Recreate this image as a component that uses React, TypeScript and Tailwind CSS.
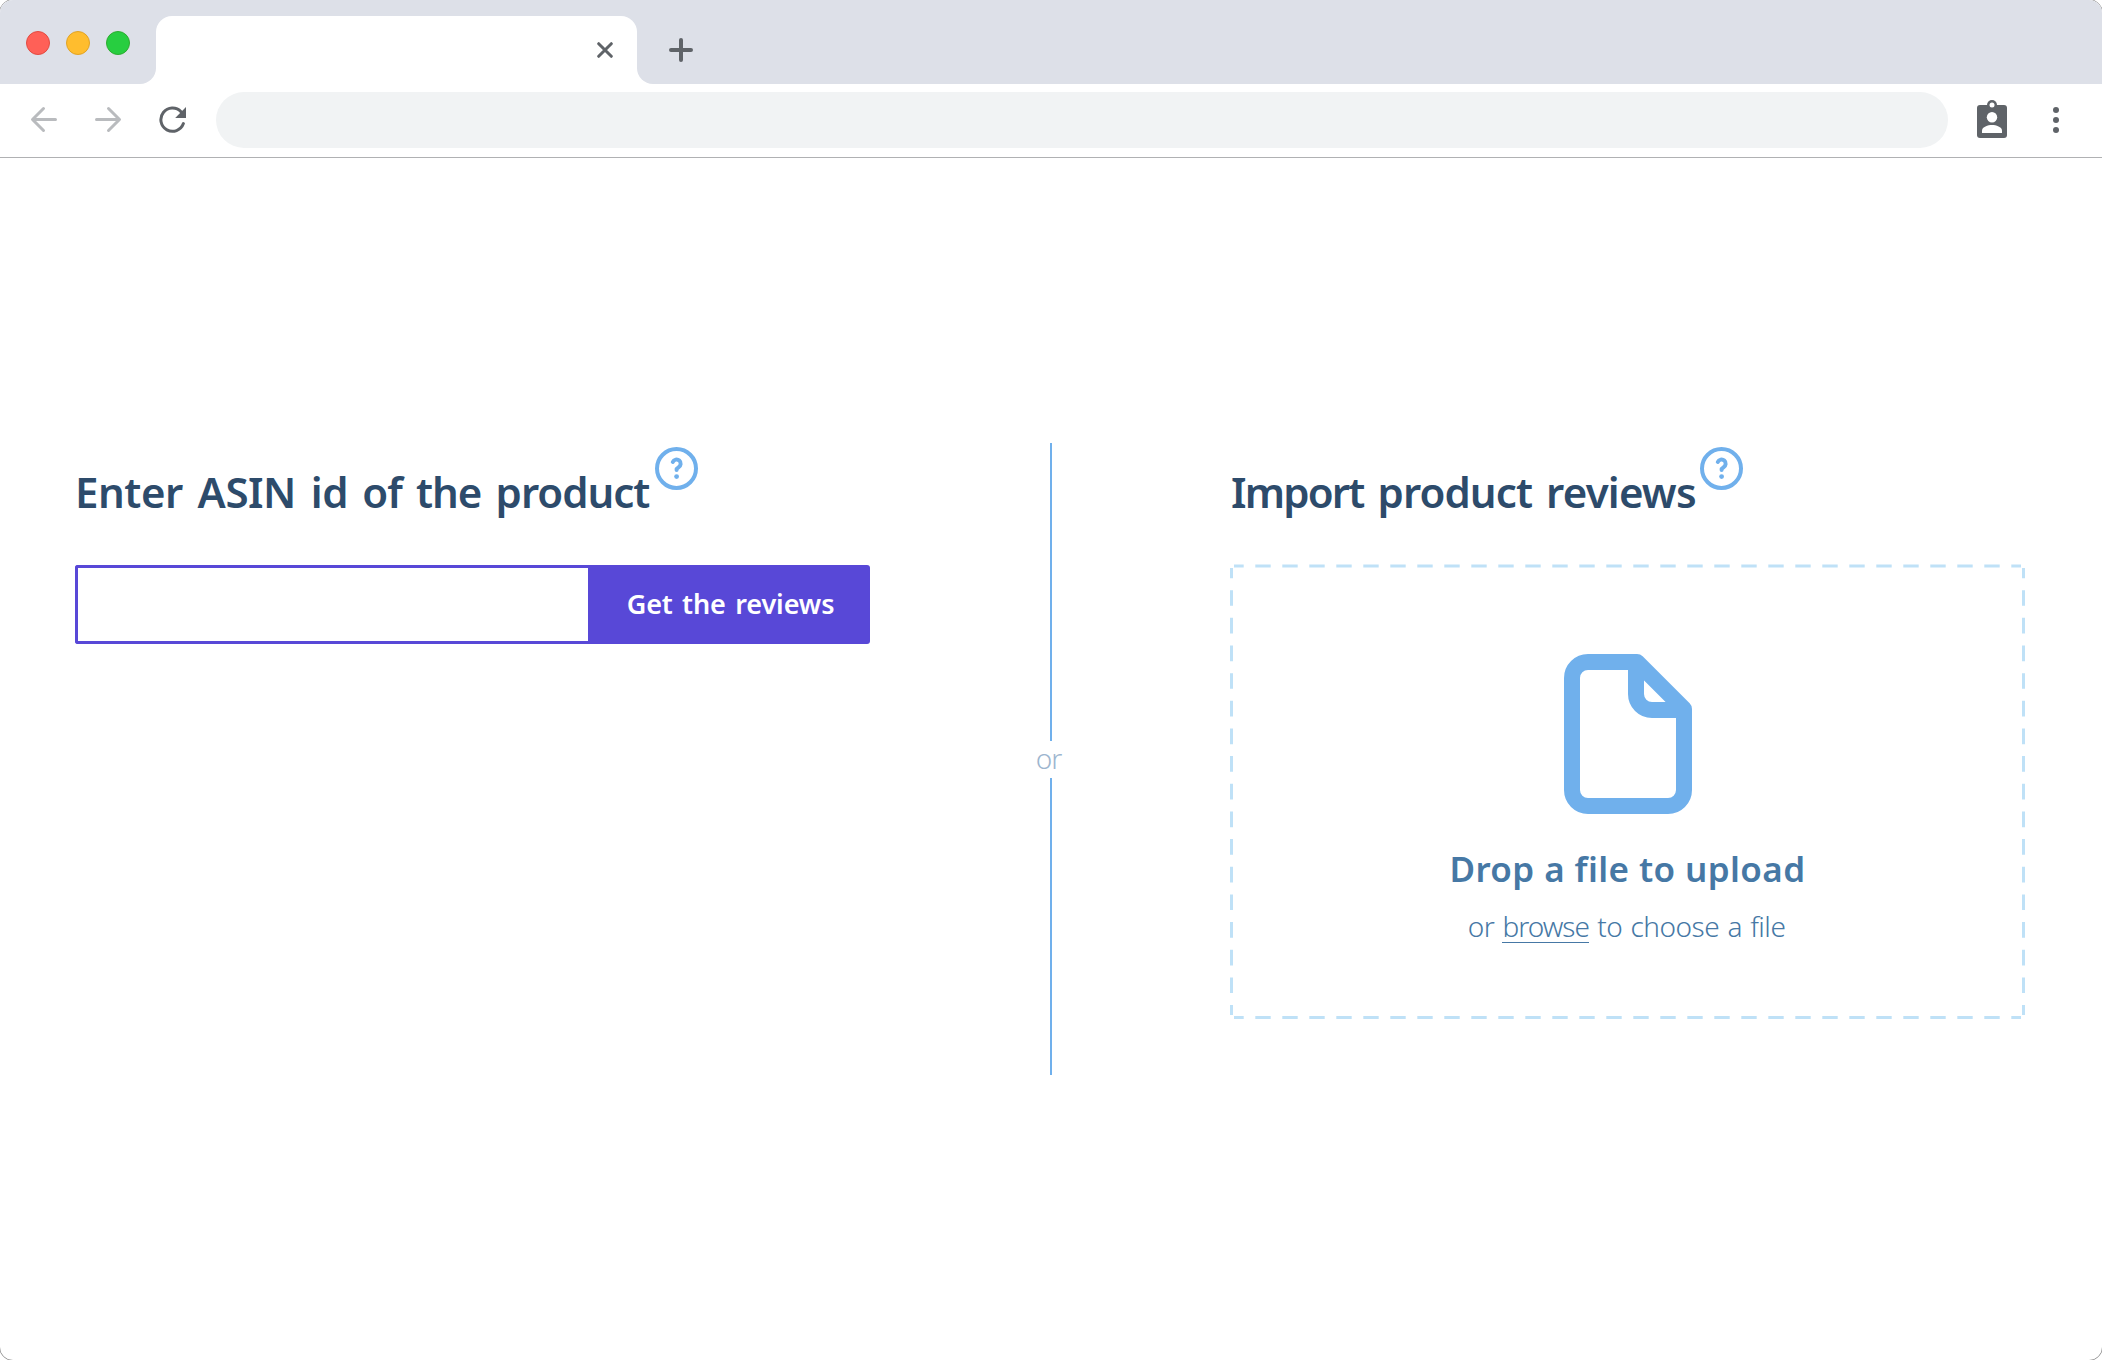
import React from "react";

function HelpIcon() {
  return (
    <svg viewBox="0 0 43 43" className="h-[43px] w-[43px] shrink-0" fill="none" stroke="#70b0ec" strokeWidth="4">
      <circle cx="21.5" cy="21.5" r="19.5" />
      <path d="M17.8 15a4.1 4.1 0 1 1 5.8 5.2c-1.2.7-2 1.5-2 2.8" strokeLinecap="round" />
      <circle cx="21.6" cy="29.6" r="2.4" fill="#70b0ec" stroke="none" />
    </svg>
  );
}

function TabStrip() {
  return (
    <div className="flex h-[84px] bg-white">
      <div className="flex w-[156px] gap-4 rounded-br-2xl bg-[#dde0e8] pt-[31px] pl-[26px]">
        <span className="h-6 w-6 rounded-full border border-[#e24b41] bg-[#ff6057]" />
        <span className="h-6 w-6 rounded-full border border-[#e1a325] bg-[#ffbd2e]" />
        <span className="h-6 w-6 rounded-full border border-[#2dac2f] bg-[#27ce40]" />
      </div>
      <div className="flex w-[481px] flex-col">
        <div className="-mb-4 h-8 bg-[#dde0e8]" />
        <div className="flex h-[68px] items-center justify-end rounded-t-2xl bg-white pr-6">
          <svg viewBox="0 0 16 16" className="h-4 w-4" stroke="#5f6368" strokeWidth="3" strokeLinecap="round">
            <path d="M1.7 1.7 14.3 14.3M14.3 1.7 1.7 14.3" />
          </svg>
        </div>
      </div>
      <div className="flex-1 rounded-bl-2xl bg-[#dde0e8] pt-[38px] pl-8">
        <svg viewBox="0 0 24 24" className="h-6 w-6" stroke="#5f6368" strokeWidth="4" strokeLinecap="round">
          <path d="M12 2v20M2 12h20" />
        </svg>
      </div>
    </div>
  );
}

function Toolbar() {
  return (
    <div className="flex h-[74px] items-start border-b border-[#b0b1b3] bg-white pt-2">
      <div className="flex h-14 w-[216px] items-center pl-[30px]">
        <svg viewBox="0 0 28 28" className="h-7 w-7" fill="none" stroke="#b9bbbe" strokeWidth="3" strokeLinecap="round" strokeLinejoin="round">
          <path d="M25.5 13.5H3M13.5 2.5 2.5 13.5l11 11" />
        </svg>
        <svg viewBox="0 0 28 28" className="ml-9 h-7 w-7" fill="none" stroke="#b9bbbe" strokeWidth="3" strokeLinecap="round" strokeLinejoin="round">
          <path d="M2.5 13.5H25M14.5 2.5l11 11-11 11" />
        </svg>
        <svg viewBox="0 0 28 28" className="ml-9 h-7 w-7" fill="none">
          <path d="M25.4 17.6A11.6 11.6 0 1 1 23 5.800" stroke="#5f6368" strokeWidth="3" strokeLinecap="round" />
          <path d="M28 1v11H17.200z" fill="#5f6368" />
        </svg>
      </div>
      <div className="h-14 w-[1732px] rounded-full bg-[#f1f3f4]" />
      <svg viewBox="0 0 30 38" className="mt-2 ml-[29px] h-[38px] w-[30px]">
        <rect x="0" y="5" width="30" height="33" rx="3" fill="#5f6368" />
        <circle cx="15" cy="5" r="5" fill="#5f6368" />
        <circle cx="15" cy="5" r="2.5" fill="#fff" />
        <circle cx="15" cy="17.3" r="5.2" fill="#fff" />
        <path d="M5 33v-2.6C5 27 11 25 15 25s10 2 10 5.400V33z" fill="#fff" />
      </svg>
      <svg viewBox="0 0 6 26" className="mt-[15px] ml-[46px] h-[26px] w-1.5" fill="#5f6368">
        <circle cx="3" cy="3" r="3" />
        <circle cx="3" cy="13" r="3" />
        <circle cx="3" cy="23" r="3" />
      </svg>
    </div>
  );
}

function Heading({ children }: { children: React.ReactNode }) {
  return (
    <div className="flex h-[117px]">
      <h1 className="pt-[21px] text-[42px] leading-[56px] font-semibold whitespace-nowrap text-[#2d4b6b]">{children}</h1>
      <div className="pt-[4px]">
        <HelpIcon />
      </div>
    </div>
  );
}

function AsinPanel() {
  return (
    <section className="w-[795px]">
      <Heading>
        <span className="mr-[5px] block w-[575px] tracking-[-1px] [word-spacing:4.300px]">
          <span className="tracking-[-0.450px]">Enter ASIN id</span> of the product
        </span>
      </Heading>
      <form className="mt-[5px] flex h-[79px]">
        <input className="w-[513px] rounded-l-[3px] border-[3px] border-r-0 border-[#5848d7] bg-white outline-none" />
        <button type="button" className="w-[282px] rounded-r-[3px] bg-[#5848d7] pl-[3px] text-[27px] font-semibold tracking-[-0.1px] whitespace-nowrap text-white [word-spacing:2.5px]">
          Get the reviews
        </button>
      </form>
    </section>
  );
}

function Divider() {
  return (
    <div className="flex h-[632px] w-[32px] flex-col items-center">
      <span className="w-[1.5px] flex-1 bg-[#70b0ec]" />
      <span className="mr-[5px] flex h-[37px] items-center pb-[3px] text-[28px] leading-none font-light tracking-[-1px] text-[#9db6cf]">or</span>
      <span className="w-[1.5px] flex-1 bg-[#70b0ec]" />
    </div>
  );
}

function DashedOutline() {
  return (
    <svg viewBox="0 0 795 455" className="pointer-events-none absolute inset-0 h-[455px] w-[795px]" stroke="#bfe1f7" strokeWidth="3">
      <path d="M4 2H791" strokeDasharray="15.4 11.6" strokeDashoffset="5.7" />
      <path d="M4 453.500H791" strokeDasharray="15.4 11.6" strokeDashoffset="5.7" />
      <path d="M1.500 4V451" strokeDasharray="15.7 11.96" strokeDashoffset="5.5" />
      <path d="M793.500 4V451" strokeDasharray="15.7 11.96" strokeDashoffset="5.5" />
    </svg>
  );
}

function ImportPanel() {
  return (
    <section className="w-[795px]">
      <Heading>
        <span className="mr-[4px] ml-px block w-[465px] tracking-[-0.9px] [word-spacing:4px]">
          <span className="tracking-[-1.8px]">Import</span> product <span className="tracking-[-0.8px]">reviews</span>
        </span>
      </Heading>
      <div className="relative mt-[4px] flex h-[455px] flex-col items-center pt-[90px]">
        <DashedOutline />
        <svg viewBox="0 0 128 160" className="h-40 w-32" fill="none" stroke="#70b0ec" strokeWidth="16" strokeLinejoin="round">
          <path d="M73 8H24A16 16 0 0 0 8 24V136a16 16 0 0 0 16 16H104a16 16 0 0 0 16-16V55Z" />
          <path d="M72 8V40a16 16 0 0 0 16 16H120" />
        </svg>
        <p className="mt-[31px] text-[35px] leading-[48px] font-semibold tracking-[0.4px] whitespace-nowrap text-[#4678a5]">
          Drop a file to upload
        </p>
        <p className="mt-[14px] pr-[2px] text-[28px] leading-[38px] font-light tracking-[-0.5px] whitespace-nowrap text-[#4678a5] [word-spacing:1.5px]">
          or <span className="inline-block h-[36px] border-b border-[#4678a5] tracking-[-1px]">browse</span> to choose a file
        </p>
      </div>
    </section>
  );
}

export default function App() {
  return (
    <div className="h-[1360px] w-[2102px] overflow-hidden bg-white font-['Noto_Sans','Open_Sans',sans-serif]">
      <div className="-m-px flex h-[1362px] w-[2104px] flex-col overflow-hidden rounded-[14px] border border-[#999999] bg-white">
        <TabStrip />
        <Toolbar />
        <main className="flex pt-[285px] pl-[75px]">
          <AsinPanel />
          <div className="ml-[165px]">
            <Divider />
          </div>
          <div className="ml-[163px]">
            <ImportPanel />
          </div>
        </main>
      </div>
    </div>
  );
}
